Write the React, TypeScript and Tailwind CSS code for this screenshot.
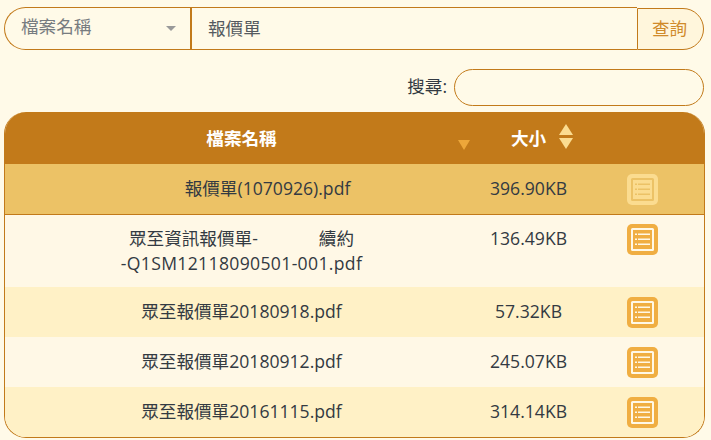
const font = { fontFamily: '"Open Sans", "Noto Sans CJK TC", sans-serif' };

function DocIcon({ faded }: { faded?: boolean }) {
  const c = faded ? "#fbdc90" : "#f0ae42";
  const bg = faded ? "#ecc266" : "#fff8e6";
  return (
    <svg width="31" height="31" viewBox="0 0 31 31" className="block">
      <rect x="0" y="0" width="31" height="31" rx="5" fill={c} />
      <rect x="4" y="4" width="23" height="23" rx="1.5" fill={bg} />
      <rect x="6" y="6" width="19" height="19" fill={c} />
      <g fill={bg}>
        <rect x="8" y="9.5" width="2" height="1.5" />
        <rect x="8" y="14.5" width="2" height="1.5" />
        <rect x="8" y="19.5" width="2" height="1.5" />
        <rect x="11" y="9.5" width="12" height="1.5" />
        <rect x="11" y="14.5" width="12" height="1.5" />
        <rect x="11" y="19.5" width="12" height="1.5" />
      </g>
    </svg>
  );
}

const rows = [
  { name: "報價單(1070926).pdf", size: "396.90KB", cls: "bg-[#ecc266] border-b border-[#c27a1a] h-[51px] items-center", text: "pb-[2px]", nameCls: "pl-[52px]", faded: true },
  { name: "", size: "136.49KB", cls: "bg-[#fff8e6] h-[72px] items-start pt-[9px]", text: "pt-[2px]", nameCls: "" },
  { name: "眾至報價單20180918.pdf", size: "57.32KB", cls: "bg-[#fff1c6] h-[50px] items-center", text: "pb-[2px]", nameCls: "" },
  { name: "眾至報價單20180912.pdf", size: "245.07KB", cls: "bg-[#fff8e6] h-[50px] items-center", text: "pb-[2px]", nameCls: "" },
  { name: "眾至報價單20161115.pdf", size: "314.14KB", cls: "bg-[#fff1c6] h-[50px] items-center", text: "pb-[2px]", nameCls: "" },
];

export default function App() {
  return (
    <div style={font} className="w-[711px] h-[440px] overflow-hidden bg-[#fffae8] px-1 pt-[7px] text-[#333a42] text-[17.6px]">
      <div className="flex h-[43px] w-[700px]">
        <div className="w-[186px] h-full flex items-center justify-between pl-4 pr-[14px] border border-r-0 border-[#c27a1a] rounded-l-[22px] text-[#777c80]">
          <span className="mb-[5px]">檔案名稱</span>
          <span className="w-0 h-0 border-x-[5px] border-x-transparent border-t-[5px] border-t-[#999]" />
        </div>
        <div className="flex-1 h-full flex items-center pl-4 border-l-2 border-[#c27a1a] relative text-[#555a60]">
          <div className="absolute inset-x-0 top-0 h-px bg-[#c27a1a]" />
          <div className="absolute inset-x-0 bottom-0 h-px bg-[#c27a1a]" />
          報價單
        </div>
        <div className="w-[67px] h-[42px] mt-px flex items-center justify-center border border-[#c27a1a] rounded-r-[21px] bg-[#fff6dc] text-[#d08a2a] pr-[2px] pb-[2px]">
          查詢
        </div>
      </div>

      <div className="flex items-center justify-end h-[37px] mt-[19px] w-[700px] gap-[7px]">
        <span className="mb-[3px]">搜尋:</span>
        <div className="w-[250px] h-[37px] border border-[#c27a1a] rounded-[19px]" />
      </div>

      <div className="mt-[6px] w-[701px] h-[326px] rounded-[22px] overflow-hidden border-x border-b border-[#c27a1a]">
        <div className="flex h-[52px] bg-[#c27a1a] text-white font-bold items-center">
          <div className="w-[473px] relative text-center">
            檔案名稱
            <span className="absolute right-[8px] top-[15px] w-0 h-0 border-x-[6.5px] border-x-transparent border-t-[10px] border-t-[#eda73a]" />
          </div>
          <div className="w-[101px] relative text-center">
            <span className="mr-[2px] ml-[2px]">大小</span>
            <span className="absolute left-[81px] top-[-1px] flex flex-col gap-[3px]">
              <span className="block w-0 h-0 border-x-[7px] border-x-transparent border-b-[11px] border-b-[#fbdc90]" />
              <span className="block w-0 h-0 border-x-[7px] border-x-transparent border-t-[11px] border-t-[#fbdc90]" />
            </span>
          </div>
        </div>
        {rows.map((r, i) => (
          <div key={i} className={`flex ${r.cls}`}>
            <div className={`w-[473px] text-center leading-[25px] ${r.text} ${r.nameCls}`}>
              {r.name || (
                <>
                  眾至資訊報價單-<span className="inline-block w-[61px]" />續約
                  <br />
                  <span className="tracking-[0.33px]">-Q1SM12118090501-001.pdf</span>
                </>
              )}
            </div>
            <div className={`w-[101px] text-center leading-[25px] ${r.text}`}>{r.size}</div>
            <div className="flex-1 flex justify-center pl-[2px]">
              <DocIcon faded={r.faded} />
            </div>
          </div>
        ))}
      </div>
    </div>
  );
}
